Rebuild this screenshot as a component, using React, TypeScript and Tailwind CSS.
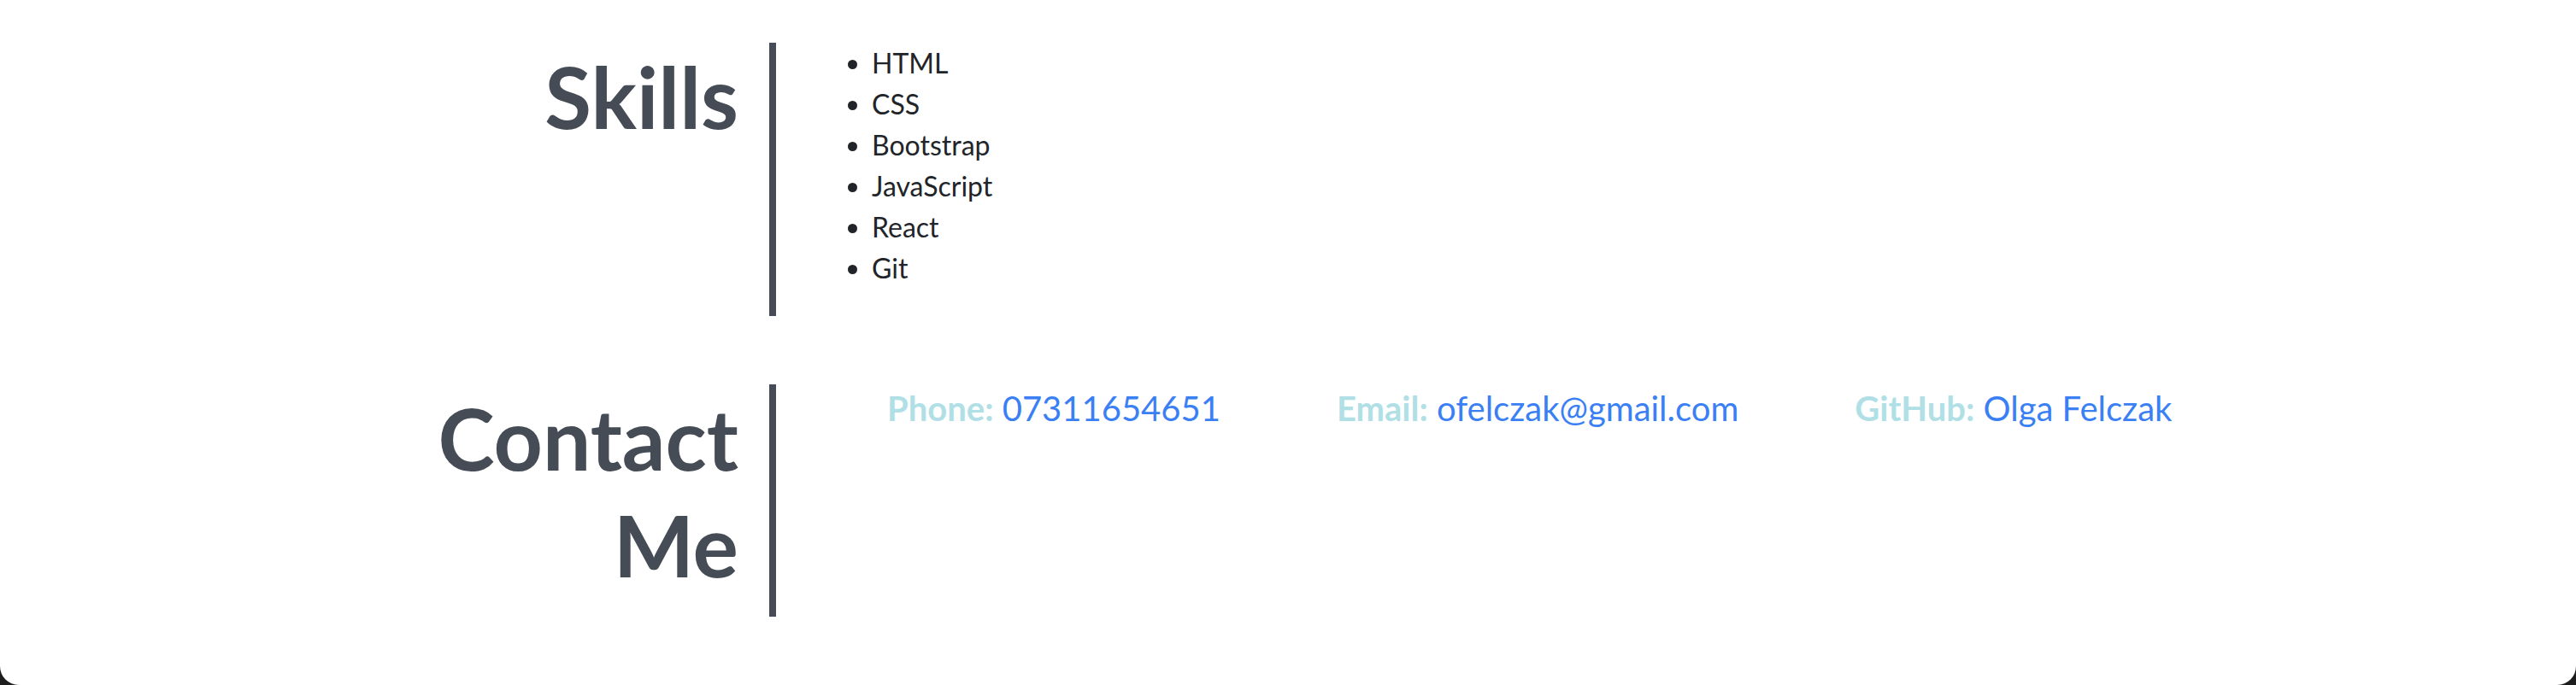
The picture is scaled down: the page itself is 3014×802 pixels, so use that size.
export default function App() {
  const skills = ["HTML", "CSS", "Bootstrap", "JavaScript", "React", "Git"];
  const contacts = [
    { label: "Phone:", value: "07311654651" },
    { label: "Email:", value: "ofelczak@gmail.com" },
    { label: "GitHub:", value: "Olga Felczak" },
  ];

  return (
    <div className="bg-[#1e1e1e] w-[3014px] h-[802px]">
      <div
        className="bg-white h-[802px] rounded-b-[22px] pt-[50px] text-[#212529]"
        style={{ fontFamily: "Lato, 'Open Sans', sans-serif" }}
      >
        {/* skills */}
        <div className="flex flex-row">
          <div className="w-[908px] border-r-8 border-[#464c55] pr-[36px] text-right">
            <h1 className="text-[100px] leading-[125px] font-bold text-[#464c55]">Skills</h1>
          </div>
          <ul className="list-disc pl-[64px] ml-[48px] mb-[32px] text-[32px] leading-[48px]">
            {skills.map((s) => (
              <li key={s}>{s}</li>
            ))}
          </ul>
        </div>

        {/* contact */}
        <div className="flex flex-row mt-[80px]">
          <div className="w-[908px] border-r-8 border-[#464c55] pr-[36px] pb-[22px] text-right">
            <h1 className="text-[100px] leading-[125px] font-bold text-[#464c55]">
              Contact
              <br />
              Me
            </h1>
          </div>
          <div className="flex flex-row gap-[136px] ml-[130px] pt-[4px] text-[40px] leading-[48px]">
            {contacts.map((c) => (
              <h5 key={c.label}>
                <span className="font-bold text-[#b0e0e6]">{c.label}</span>{" "}
                <a href="#" className="text-[#3b7ff5]">
                  {c.value}
                </a>
              </h5>
            ))}
          </div>
        </div>
      </div>
    </div>
  );
}
